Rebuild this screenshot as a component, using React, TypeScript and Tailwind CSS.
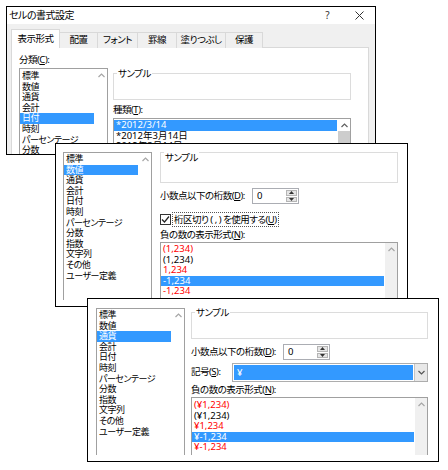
import React from 'react';

type Item = { text: string; red?: boolean };

const categories: Item[] = [
  '標準', '数値', '通貨', '会計', '日付', '時刻', 'パーセンテージ',
  '分数', '指数', '文字列', 'その他', 'ユーザー定義',
].map((text) => ({ text }));

const dates: Item[] = ['*2012/3/14', '*2012年3月14日', '2012年3月14日', '2012/3/14'].map((text) => ({ text }));

const negatives: Item[] = [
  { text: '(1,234)', red: true },
  { text: '(1,234)' },
  { text: '1,234', red: true },
  { text: '-1,234' },
  { text: '-1,234', red: true },
];

const yenNegatives: Item[] = [
  { text: '(¥1,234)', red: true },
  { text: '(¥1,234)' },
  { text: '¥1,234', red: true },
  { text: '¥-1,234' },
  { text: '¥-1,234', red: true },
];

// 小さい山形の矢印（スクロールバー・ドロップダウン用）
const Chevron = ({ down = false, color = '#a6a6a6' }: { down?: boolean; color?: string }) => (
  <svg width="7" height="5" viewBox="0 0 7 5">
    <polyline
      points={down ? '0.5,1 3.5,4 6.5,1' : '0.5,4 3.5,1 6.5,4'}
      fill="none"
      stroke={color}
      strokeWidth="1.2"
    />
  </svg>
);

interface ListBoxProps {
  items: Item[];
  selected: number;
  className: string;
  padTop: string;
  track: 'white' | 'gray' | 'thumb';
  textClass: string;
  arrowColor?: string;
}

const ListBox: React.FC<ListBoxProps> = ({ items, selected, className, padTop, track, textClass, arrowColor }) => {
  return (
    <div className={`shrink-0 flex overflow-hidden border border-b-0 border-[#a0a0a0] bg-white ${className}`}>
      <div className={`flex-1 mr-px overflow-hidden ${padTop} ${textClass}`}>
        {items.map((item, i) => (
          <div
            key={i}
            className={`h-[10.6px] leading-[10.6px] pl-[2px] whitespace-nowrap ${
              i === selected ? 'bg-[#3399ff] text-white' : item.red ? 'text-[#ff0000]' : 'text-black'
            }`}
          >
            {item.text}
          </div>
        ))}
      </div>
      <div className={`w-[12px] flex flex-col ${track === 'gray' ? 'bg-[#f0f0f0]' : 'bg-white'}`}>
        <div className="h-[12px] flex items-center justify-center">
          <Chevron color={arrowColor} />
        </div>
        {track === 'thumb' && <div className="flex-1 bg-[#cdcdcd]" />}
      </div>
    </div>
  );
};

const GroupBox = ({ className, labelTop }: { className: string; labelTop: string }) => (
  <div className={`relative shrink-0 border border-[#dcdcdc] ${className}`}>
    <span className={`absolute left-[3px] ${labelTop} bg-white px-[1px] leading-[12px]`}>サンプル</span>
  </div>
);

const SpinBox = () => (
  <div className="w-[47px] h-[16px] border border-[#abadb3] bg-white flex tracking-normal">
    <span className="flex-1 pl-[4px] leading-[14px]">0</span>
    <div className="w-[11px] my-px mr-px flex flex-col gap-px">
      <div className="flex-1 bg-[#e5e5e5] border border-[#b5b5b5] flex items-center justify-center">
        <svg width="5" height="3" viewBox="0 0 5 3"><polygon points="0,3 2.5,0 5,3" fill="#333" /></svg>
      </div>
      <div className="flex-1 bg-[#e5e5e5] border border-[#b5b5b5] flex items-center justify-center">
        <svg width="5" height="3" viewBox="0 0 5 3"><polygon points="0,0 2.5,3 5,0" fill="#333" /></svg>
      </div>
    </div>
  </div>
);

const DecimalRow = ({ className }: { className: string }) => (
  <div className={`shrink-0 flex items-center h-[16px] ${className}`}>
    <span className="w-[92px] whitespace-nowrap">
      小数点以下の桁数(<span className="underline">D</span>):
    </span>
    <SpinBox />
  </div>
);

const tabs = [
  { label: '配置', w: 'w-[38px]' },
  { label: 'フォント', w: 'w-[40px]' },
  { label: '罫線', w: 'w-[39px]' },
  { label: '塗りつぶし', w: 'w-[49px]' },
  { label: '保護', w: 'w-[37px]' },
];

export default function App() {
  return (
    <div className="relative w-[448px] h-[470px] bg-white overflow-hidden text-[9.5px] tracking-[-0.5px] text-black font-['Noto_Sans','Noto_Sans_CJK_JP',sans-serif] [font-feature-settings:'palt']">
      {/* 1枚目：日付 */}
      <div className="absolute left-[6px] top-[6px] w-[370px] h-[149px] border border-black bg-[#f0f0f0] overflow-hidden">
        <div className="h-[17px] bg-white flex items-center justify-between pl-[2px]">
          <span className="text-[10px]">セルの書式設定</span>
          <div className="flex items-center gap-[26px] pr-[11px]">
            <span className="text-[10px] text-[#333]">?</span>
            <svg width="9" height="9" viewBox="0 0 9 9">
              <path d="M0.5 0.5 L8.5 8.5 M8.5 0.5 L0.5 8.5" stroke="#333" strokeWidth="1" />
            </svg>
          </div>
        </div>

        {/* タブ */}
        <div className="relative z-10 flex items-end h-[24px] pl-[4px] -mb-px">
          <div className="w-[49px] h-[19px] bg-white border border-b-0 border-[#d9d9d9] flex items-center justify-center">
            表示形式
          </div>
          {tabs.map((t) => (
            <div
              key={t.label}
              className={`${t.w} h-[16px] border-t border-r border-[#d9d9d9] bg-[#f0f0f0] flex items-center justify-center`}
            >
              {t.label}
            </div>
          ))}
        </div>

        <div className="ml-[4px] w-[358px] h-[110px] bg-white border border-[#d9d9d9] flex items-start overflow-hidden pl-[7px] pt-[6px]">
          <div className="flex flex-col w-[89px] shrink-0">
            <div className="h-[12px] leading-[12px]">
              分類(<span className="underline">C</span>):
            </div>
            <ListBox
              items={categories}
              selected={4}
              className="mt-[2px] w-[89px] h-[90px]"
              padTop="pt-[2px]"
              track="white"
              textClass="text-[9px]"
            />
          </div>
          <div className="ml-[5px] w-[238px] shrink-0 flex flex-col">
            <GroupBox className="mt-[19px] h-[27px]" labelTop="top-[-6px]" />
            <div className="mt-[4px] h-[12px] leading-[12px]">
              種類(<span className="underline">T</span>):
            </div>
            <ListBox
              items={dates}
              selected={0}
              className="mt-[2px] h-[60px]"
              padTop="pt-px"
              track="thumb"
              textClass="tracking-normal"
              arrowColor="#606060"
            />
          </div>
        </div>
      </div>

      {/* 2枚目：数値 */}
      <div className="absolute left-[55px] top-[143px] w-[353px] h-[164px] border border-black bg-white overflow-hidden flex items-start pl-[7px] pt-[8px]">
        <ListBox
          items={categories}
          selected={1}
          className="w-[89px] h-[148px]"
          padTop="pt-px"
          track="white"
          textClass="text-[9px]"
        />
        <div className="ml-[8px] w-[238px] shrink-0 flex flex-col">
          <GroupBox className="h-[31px]" labelTop="top-[-1px]" />
          <DecimalRow className="mt-[5px]" />
          <div className="shrink-0 mt-[8px] h-[15px] flex items-center">
            <div className="w-[11px] h-[11px] border border-[#333] bg-white flex items-center justify-center">
              <svg width="9" height="9" viewBox="0 0 9 9">
                <polyline points="1,4.5 3.5,7 8,1.5" fill="none" stroke="#222" strokeWidth="1.2" />
              </svg>
            </div>
            <div className="ml-px h-[15px] border border-dotted border-[#555] px-[1px] leading-[13px] whitespace-nowrap">
              桁区切り ( , ) を使用する(<span className="underline">U</span>)
            </div>
          </div>
          <div className="shrink-0 mt-[2px] h-[12px] leading-[12px]">
            負の数の表示形式(<span className="underline">N</span>):
          </div>
          <ListBox
            items={negatives}
            selected={3}
            className="mt-px h-[60px]"
            padTop="pt-px"
            track="gray"
            textClass="tracking-normal"
          />
        </div>
      </div>

      {/* 3枚目：通貨 */}
      <div className="absolute left-[87px] top-[298px] w-[352px] h-[164px] border border-black bg-white overflow-hidden flex items-start pl-[8px] pt-[9px]">
        <ListBox
          items={categories}
          selected={2}
          className="w-[89px] h-[147px]"
          padTop="pt-px"
          track="white"
          textClass="text-[9px]"
        />
        <div className="ml-[6px] w-[237px] shrink-0 flex flex-col">
          <GroupBox className="mt-[4px] h-[27px]" labelTop="top-[-6px]" />
          <DecimalRow className="mt-[5px]" />
          <div className="shrink-0 mt-[3px] h-[19px] flex items-center">
            <span className="w-[41px] whitespace-nowrap">
              記号(<span className="underline">S</span>):
            </span>
            <div className="w-[196px] h-[19px] border border-[#adadad] bg-white flex">
              <div className="flex-1 m-px bg-[#3399ff] text-white pl-[3px] leading-[15px]">¥</div>
              <div className="w-[13px] bg-[#e8e8e8] border-l border-[#c4c4c4] flex items-center justify-center">
                <Chevron down color="#555" />
              </div>
            </div>
          </div>
          <div className="shrink-0 mt-[2px] h-[12px] leading-[12px]">
            負の数の表示形式(<span className="underline">N</span>):
          </div>
          <ListBox
            items={yenNegatives}
            selected={3}
            className="mt-px h-[58px]"
            padTop="pt-[2px]"
            track="gray"
            textClass="tracking-normal"
          />
        </div>
      </div>
    </div>
  );
}
